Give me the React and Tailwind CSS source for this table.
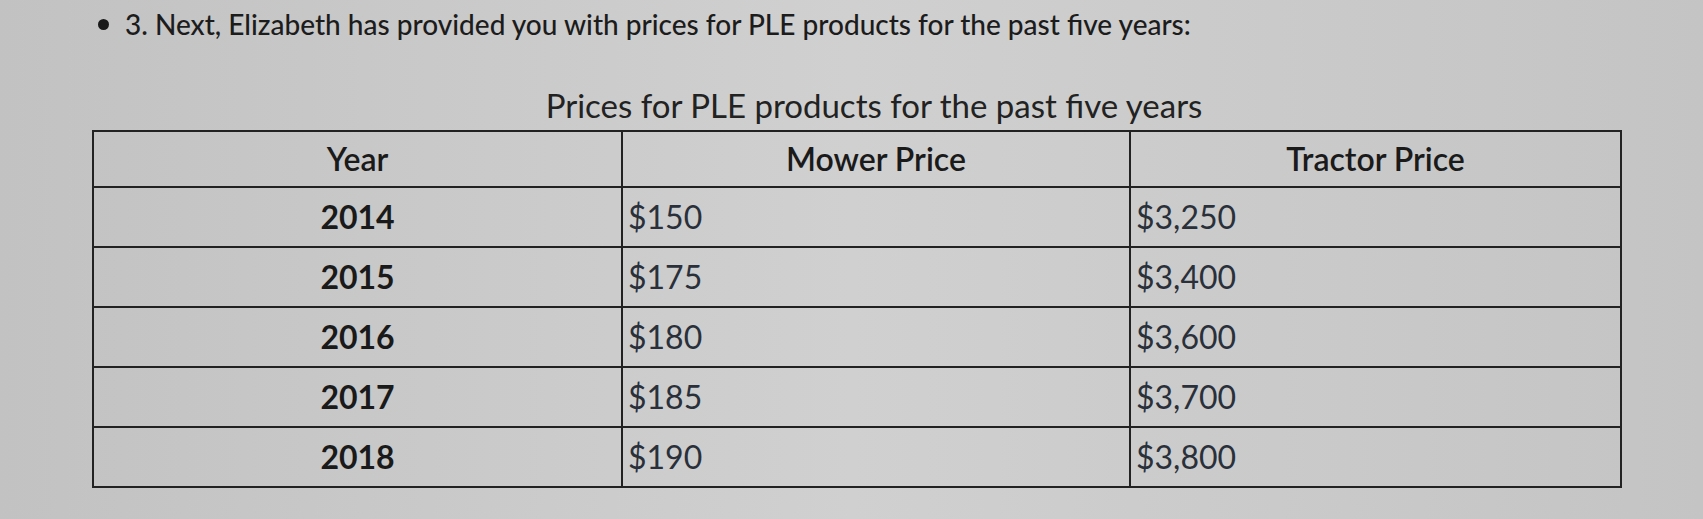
const rows = [
  ["2014", "$150", "$3,250"],
  ["2015", "$175", "$3,400"],
  ["2016", "$180", "$3,600"],
  ["2017", "$185", "$3,700"],
  ["2018", "$190", "$3,800"],
];

export default function App() {
  return (
    <div
      className="w-[1703px] h-[519px] overflow-hidden bg-gradient-to-r from-[#c2c2c2] via-[#d0d0d0] to-[#c4c4c4] text-[#1c1c1c]"
      style={{ fontFamily: "Lato, 'Open Sans', sans-serif" }}
    >
      <div className="flex items-center pl-[98px] h-[48px]">
        <span className="w-[11px] h-[11px] rounded-full bg-[#1a1a1a] mr-[16px]"></span>
        <span className="text-[28px] leading-none font-medium">
          3. Next, Elizabeth has provided you with prices for PLE products for the past five years:
        </span>
      </div>

      <div className="pl-[92px]">
        <div className="w-[1528px] pl-[36px] pt-[32px] text-center text-[33px] leading-[50px] text-[#222]">
          Prices for PLE products for the past five years
        </div>
        <table className="w-[1528px] border-collapse border-2 border-[#222] table-fixed">
          <colgroup>
            <col className="w-[529px]" />
            <col className="w-[508px]" />
            <col className="w-[491px]" />
          </colgroup>
          <thead>
            <tr className="h-[56px]">
              <th className="border-2 border-[#222] text-[32px] font-semibold text-[#1a1a1a]">Year</th>
              <th className="border-2 border-[#222] text-[32px] font-semibold text-[#1a1a1a]">Mower Price</th>
              <th className="border-2 border-[#222] text-[32px] font-semibold text-[#1a1a1a]">Tractor Price</th>
            </tr>
          </thead>
          <tbody>
            {rows.map((r) => (
              <tr key={r[0]} className="h-[60px]">
                <td className="border-2 border-[#222] text-center text-[32px] font-bold text-[#1a1a1a]">{r[0]}</td>
                <td className="border-2 border-[#222] pl-[5px] text-[32px] text-[#2a303a]">{r[1]}</td>
                <td className="border-2 border-[#222] pl-[5px] text-[32px] text-[#2a303a]">{r[2]}</td>
              </tr>
            ))}
          </tbody>
        </table>
      </div>
    </div>
  );
}
